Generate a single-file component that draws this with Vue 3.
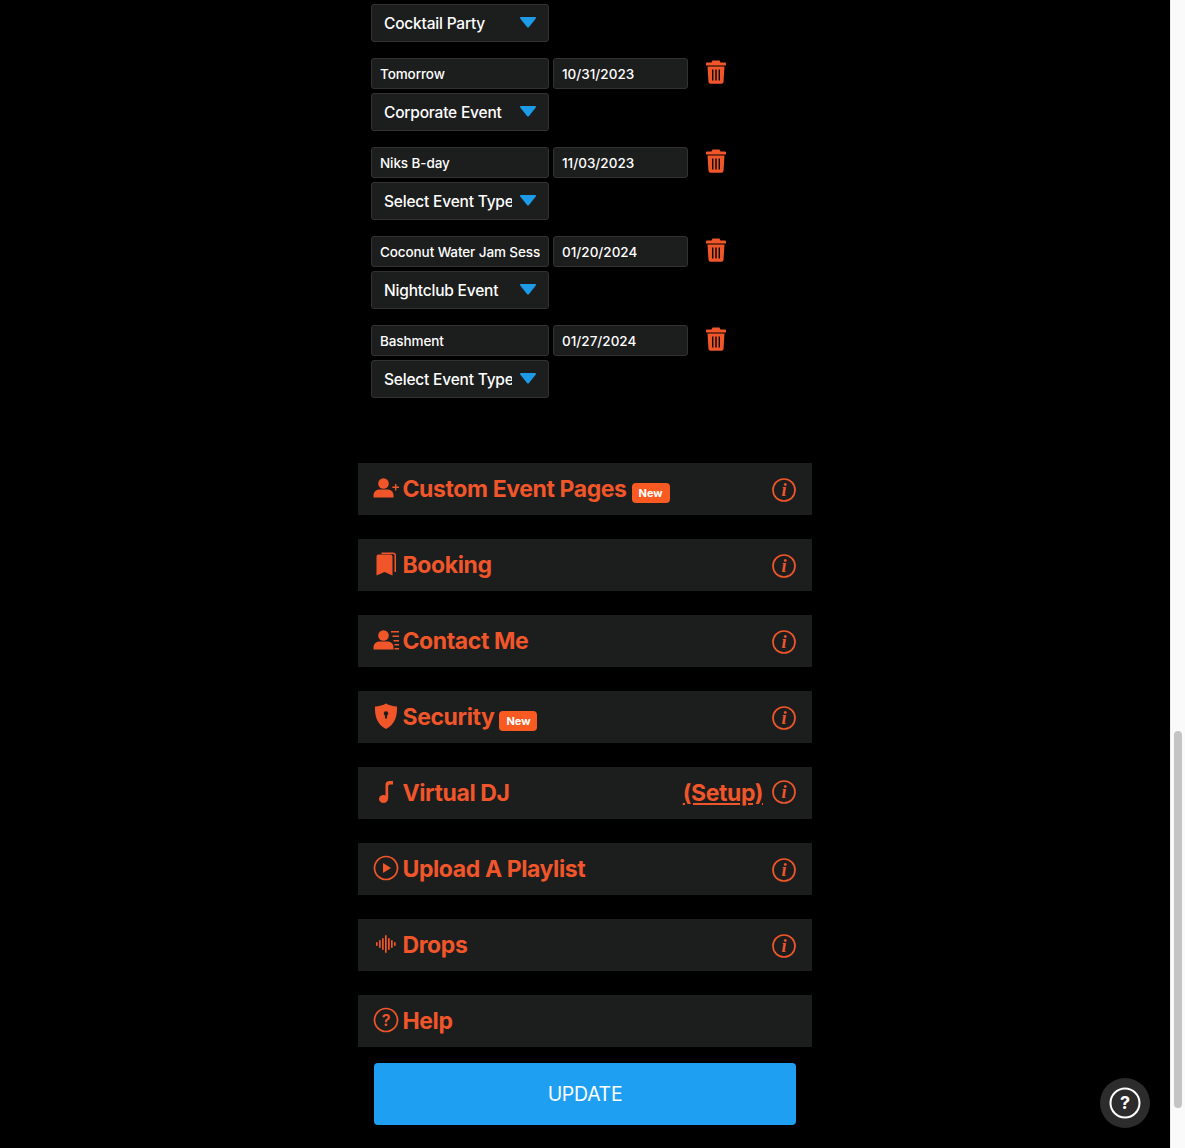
<script setup>
const events = [
  { name: "Tomorrow", date: "10/31/2023", type: "Corporate Event" },
  { name: "Niks B-day", date: "11/03/2023", type: "Select Event Type" },
  { name: "Coconut Water Jam Session", date: "01/20/2024", type: "Nightclub Event" },
  { name: "Bashment", date: "01/27/2024", type: "Select Event Type" },
];

const sections = [
  { title: "Custom Event Pages", icon: "personAdd", isNew: true, info: true },
  { title: "Booking", icon: "bookmark", info: true },
  { title: "Contact Me", icon: "contact", info: true },
  { title: "Security", icon: "shield", isNew: true, info: true },
  { title: "Virtual DJ", icon: "note", setup: true, info: true },
  { title: "Upload A Playlist", icon: "play", info: true },
  { title: "Drops", icon: "wave", info: true },
  { title: "Help", icon: "help" },
];

const waveBars = [
  [1, 2], [4, 4], [7, 6], [10, 9], [13, 6], [16, 4], [19, 2],
];
</script>

<template>
  <div class="page">
    <main class="content">
      <div class="events">
        <div class="select first">
          <span class="select-text">Cocktail Party</span>
          <svg class="caret" viewBox="0 0 18 12" width="18" height="12">
            <path d="M2 1h14a1 1 0 0 1 .8 1.600L10 11a1.300 1.300 0 0 1-2 0L1.200 2.600A1 1 0 0 1 2 1z" fill="#1e9be6" />
          </svg>
        </div>

        <div v-for="ev in events" :key="ev.name" class="event">
          <div class="event-row">
            <div class="field name"><span>{{ ev.name }}</span></div>
            <div class="field date"><span>{{ ev.date }}</span></div>
            <svg class="trash" viewBox="0 0 20 24" width="20" height="24">
              <path d="M6.500 0.500h7l1 2h4.500a1 1 0 0 1 1 1v2H0v-2a1 1 0 0 1 1-1h4.500z" fill="#f0562a" />
              <path fill-rule="evenodd" d="M1.500 6.500h17l-1 15.500a2 2 0 0 1-2 1.800h-11a2 2 0 0 1-2-1.800zM6 9.500v11h1.400v-11zM9.300 9.500v11h1.400v-11zM12.600 9.500v11H14v-11z" fill="#f0562a" />
            </svg>
          </div>
          <div class="select">
            <span class="select-text">{{ ev.type }}</span>
            <svg class="caret" viewBox="0 0 18 12" width="18" height="12">
              <path d="M2 1h14a1 1 0 0 1 .8 1.600L10 11a1.300 1.300 0 0 1-2 0L1.200 2.600A1 1 0 0 1 2 1z" fill="#1e9be6" />
            </svg>
          </div>
        </div>
      </div>

      <section class="sections">
        <div v-for="s in sections" :key="s.title" class="bar">
          <span class="bar-icon">
            <svg v-if="s.icon === 'personAdd'" viewBox="0 0 26 20" width="26" height="20" fill="#f0562a">
              <circle cx="10.500" cy="5.500" r="5.300" />
              <path d="M0.500 19.500v-2c0-4 3-6 6-6h8c3 0 6 2 6 6v2z" />
              <path d="M22 6h1.400v2.600H26V10h-2.600v2.600H22V10h-2.600V8.600H22z" />
            </svg>
            <svg v-else-if="s.icon === 'bookmark'" viewBox="0 0 20 24" width="20" height="24" fill="#f0562a">
              <path d="M0.500 4.500a2 2 0 0 1 2-2h12a2 2 0 0 1 2 2v19l-8-3.500-8 3.500z" />
              <path d="M5.500 0.500H17a3 3 0 0 1 3 3V20h-1.500V3.500A1.500 1.500 0 0 0 17 2H5.500z" />
            </svg>
            <svg v-else-if="s.icon === 'contact'" viewBox="0 0 26 20" width="26" height="20" fill="#f0562a">
              <circle cx="10.500" cy="5.500" r="5.300" />
              <path d="M0.500 19.500v-2c0-4 3-6 6-6h8c3 0 6 2 6 6v2z" />
              <path d="M18 1h8v1.500h-8zM19.500 5.500H26V7h-6.500zM20.500 10H26v1.500h-5.500zM21.500 14H26v1.500h-4.500zM21.500 18H26v1.500h-4.500z" />
            </svg>
            <svg v-else-if="s.icon === 'shield'" viewBox="0 0 24 26" width="24" height="26">
              <path fill="#f0562a" d="M12 0.500c3 1.700 7 2.800 11 3 .3 9-1.500 17.500-11 22.500C2.500 21 .7 12.500 1 3.500c4-.2 8-1.300 11-3z" />
              <circle cx="12" cy="10.500" r="2.200" fill="#1c1d1d" />
              <path d="M11 11.500h2v4h-2z" fill="#1c1d1d" />
            </svg>
            <svg v-else-if="s.icon === 'note'" viewBox="0 0 20 24" width="20" height="24" fill="#f0562a">
              <ellipse cx="7.500" cy="19" rx="4.500" ry="4" />
              <path d="M9.500 19V5a4 4 0 0 1 4-4H17v3.500h-3a1.800 1.800 0 0 0-1.800 1.800V19z" />
            </svg>
            <svg v-else-if="s.icon === 'play'" viewBox="0 0 26 26" width="26" height="26">
              <circle cx="13" cy="13" r="11.500" fill="none" stroke="#f0562a" stroke-width="1.700" />
              <path d="M10 8v10l8-5z" fill="#f0562a" />
            </svg>
            <svg v-else-if="s.icon === 'wave'" viewBox="0 0 22 20" width="22" height="20" fill="#f0562a">
              <rect v-for="b in waveBars" :key="b[0]" :x="b[0]" :y="10 - b[1]" width="1.700" :height="b[1] * 2" rx="0.800" />
            </svg>
            <svg v-else viewBox="0 0 26 26" width="26" height="26">
              <circle cx="13" cy="13" r="11.500" fill="none" stroke="#f0562a" stroke-width="1.700" />
              <text x="13" y="18.500" text-anchor="middle" class="help-mark">?</text>
            </svg>
          </span>
          <h3 class="bar-title">{{ s.title }}</h3>
          <span v-if="s.isNew" class="badge">New</span>
          <span class="spacer"></span>
          <a v-if="s.setup" class="setup">(Setup)</a>
          <svg v-if="s.info" class="info" :class="{ raised: s.setup }" viewBox="0 0 24 24" width="24" height="24">
            <circle cx="12" cy="12" r="11" fill="none" stroke="#f0562a" stroke-width="1.700" />
            <text x="12" y="18" text-anchor="middle" class="info-mark">i</text>
          </svg>
        </div>
      </section>

      <button class="update">UPDATE</button>
    </main>

    <div class="scrollbar"><div class="thumb"></div></div>

    <div class="help-btn">
      <svg viewBox="0 0 32 32" width="32" height="32">
        <circle cx="16" cy="16" r="14.500" fill="none" stroke="#fff" stroke-width="2" />
        <text x="16" y="22" text-anchor="middle" class="help-btn-mark">?</text>
      </svg>
    </div>
  </div>
</template>

<style>
html, body {
  margin: 0;
  background: #000;
}
</style>

<style scoped>
.page {
  display: flex;
  height: 1148px;
  overflow: hidden;
  position: relative;
  font-family: Inter, "Liberation Sans", sans-serif;
}

.content {
  width: 1170px;
  background: #000;
  flex: none;
  padding-top: 4px;
  box-sizing: border-box;
}

.events {
  margin-left: 371px;
  height: 459px;
  display: flex;
  flex-direction: column;
  gap: 16px;
}

.event-row {
  display: flex;
  align-items: flex-start;
  gap: 4px;
  margin-bottom: 4px;
}

.field,
.select {
  box-sizing: border-box;
  background: #1c1d1d;
  border: 1px solid #333230;
  border-radius: 3px;
  color: #fff;
  display: flex;
  align-items: center;
}

.field {
  height: 31px;
  font-size: 13.500px;
  font-weight: 500;
  overflow: hidden;
  white-space: nowrap;
}

.field span {
  display: block;
  overflow: hidden;
}

.field.name {
  width: 178px;
  padding: 0 8px;
  letter-spacing: -0.1px;
}

.field.date {
  width: 135px;
  padding: 0 8px;
  letter-spacing: 0;
}

.trash {
  margin: 2px 0 0 14px;
}

.select {
  width: 178px;
  height: 38px;
  padding-left: 12px;
  font-size: 15.500px;
  font-weight: 500;
  letter-spacing: -0.2px;
}

.select-text {
  width: 128px;
  overflow: hidden;
  white-space: nowrap;
  flex: none;
}

.caret {
  margin-left: 7px;
  margin-top: -2px;
  flex: none;
}

.sections {
  margin-left: 358px;
  width: 454px;
  display: flex;
  flex-direction: column;
  gap: 24px;
}

.bar {
  height: 52px;
  box-sizing: border-box;
  background: #1c1d1d;
  display: flex;
  align-items: center;
  padding: 0 16px 0 15px;
  color: #f0562a;
}

.bar-icon {
  width: 26px;
  height: 26px;
  margin-right: 3.500px;
  flex: none;
  display: flex;
  align-items: center;
  justify-content: center;
  margin-top: -3px;
}

.bar-title {
  margin: 0;
  font-size: 23px;
  font-weight: 700;
  line-height: 30px;
  margin-top: -1px;
  letter-spacing: -0.4px;
}

.badge {
  background: #f95a22;
  color: #fff;
  font-size: 11px;
  font-weight: 700;
  border-radius: 4px;
  margin: 7px 0 0 5px;
  width: 38px;
  height: 20px;
  display: flex;
  align-items: center;
  justify-content: center;
}

.spacer {
  flex: 1;
}

.setup {
  font-size: 23px;
  font-weight: 700;
  letter-spacing: -0.4px;
  text-decoration: underline;
  margin: -1px 9px 0 0;
}

.info {
  margin-top: 2px;
}

.info.raised {
  margin-top: -2px;
}

.info-mark {
  font-family: "Liberation Serif", serif;
  font-style: italic;
  font-weight: 700;
  font-size: 18px;
  fill: #f0562a;
}

.help-mark {
  font-family: Inter, sans-serif;
  font-size: 16px;
  font-weight: 600;
  fill: #f0562a;
}

.update {
  display: block;
  margin: 16px 0 0 374px;
  width: 422px;
  height: 62px;
  border: 0;
  border-radius: 4px;
  background: #1e9ff2;
  color: #fff;
  font-family: Inter, sans-serif;
  font-size: 19.500px;
  letter-spacing: -0.3px;
}

.scrollbar {
  width: 15px;
  flex: none;
  background: #fafafa;
  border-left: 1px solid #ececec;
  box-sizing: border-box;
  padding: 731px 3px 0 3px;
}

.thumb {
  height: 377px;
  width: 8px;
  border-radius: 4px;
  background: #c4c4c4;
}

.help-btn {
  position: absolute;
  left: 1100px;
  top: 1078px;
  width: 50px;
  height: 50px;
  border-radius: 50%;
  background: #2c2c2c;
  display: flex;
  align-items: center;
  justify-content: center;
}

.help-btn-mark {
  font-family: Inter, sans-serif;
  font-size: 18px;
  font-weight: 700;
  fill: #fff;
}
</style>
